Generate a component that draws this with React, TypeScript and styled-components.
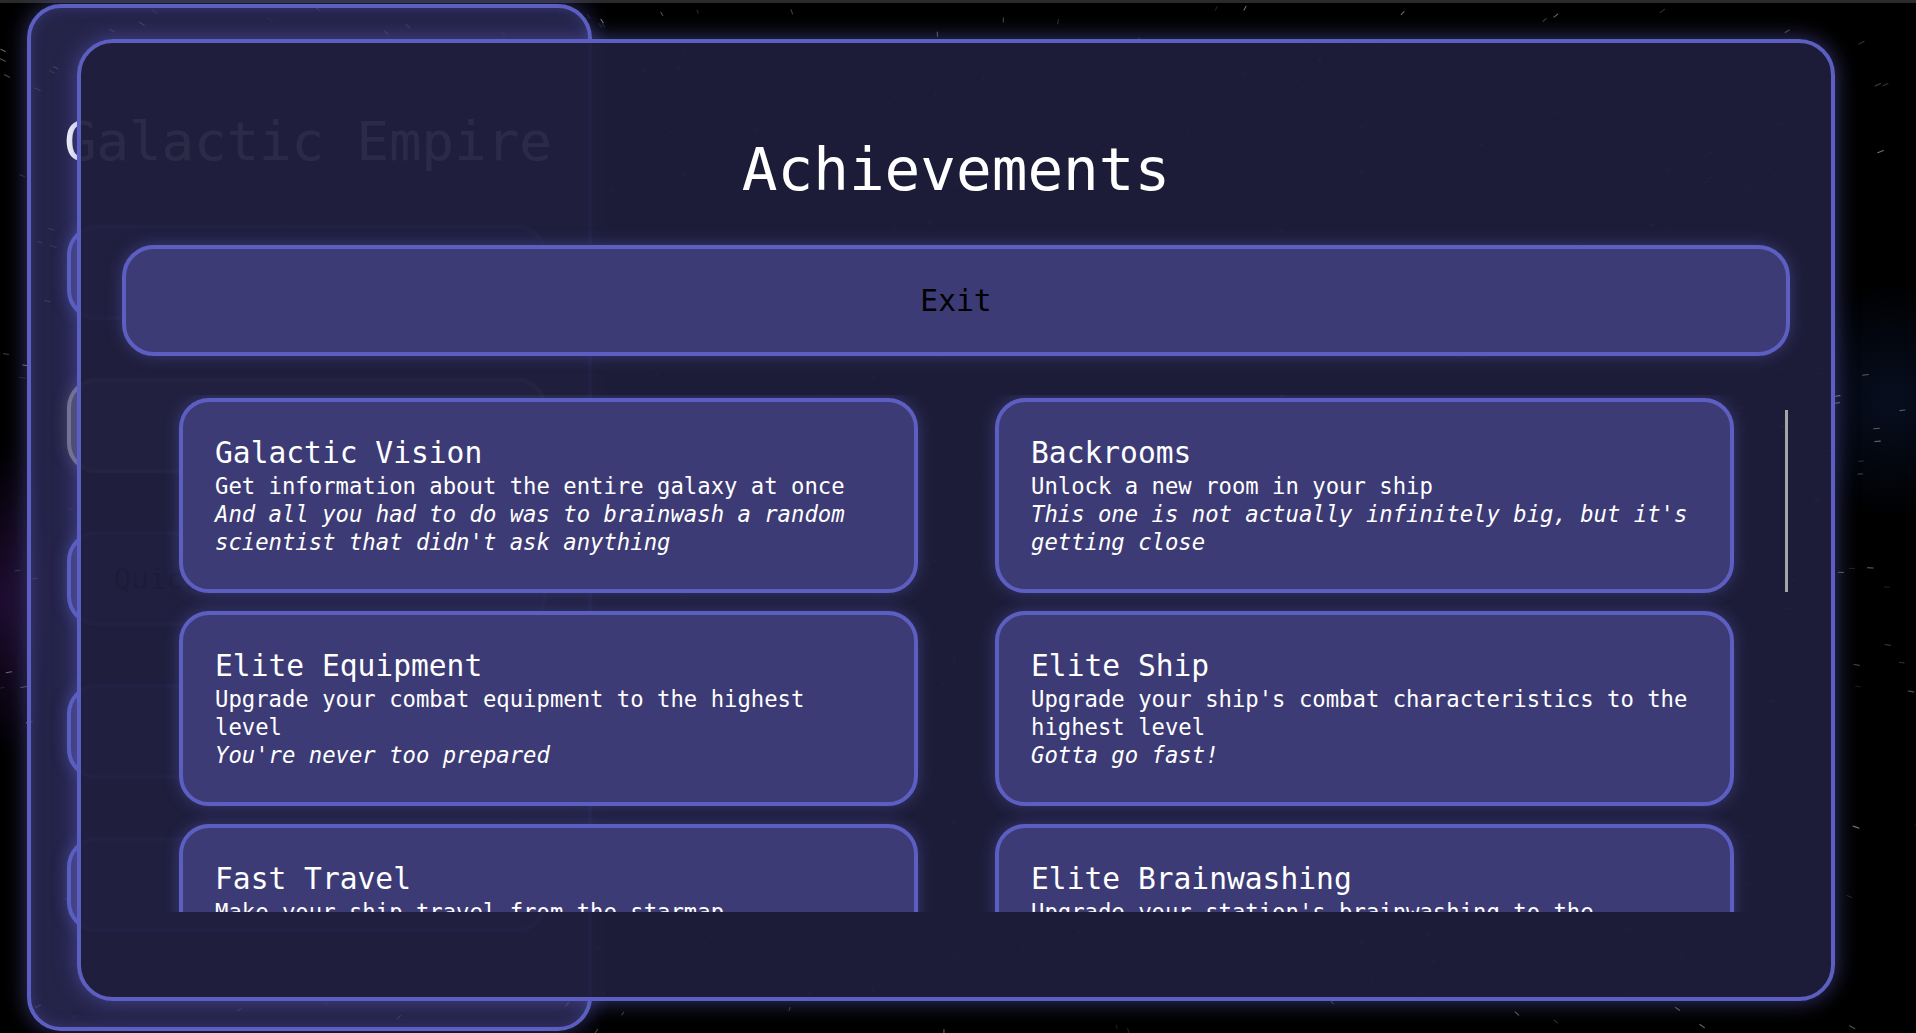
import React, { useMemo } from "react";
import styled, { createGlobalStyle } from "styled-components";

const GlobalStyle = createGlobalStyle`
  html, body {
    margin: 0;
    padding: 0;
    background: #000;
    overflow: hidden;
  }
  * {
    box-sizing: border-box;
  }
`;

const MONO = `"DejaVu Sans Mono", "Liberation Mono", monospace`;
const BORDER = "#5c5fc1";
const PANEL = "#3d3b75";

type Achievement = {
  name: string;
  description: string;
  flavor: string;
};

const achievements: Achievement[] = [
  {
    name: "Galactic Vision",
    description: "Get information about the entire galaxy at once",
    flavor:
      "And all you had to do was to brainwash a random scientist that didn't ask anything",
  },
  {
    name: "Backrooms",
    description: "Unlock a new room in your ship",
    flavor:
      "This one is not actually infinitely big, but it's getting close",
  },
  {
    name: "Elite Equipment",
    description: "Upgrade your combat equipment to the highest level",
    flavor: "You're never too prepared",
  },
  {
    name: "Elite Ship",
    description:
      "Upgrade your ship's combat characteristics to the highest level",
    flavor: "Gotta go fast!",
  },
  {
    name: "Fast Travel",
    description: "Make your ship travel from the starmap",
    flavor: "Who needs a pilot anyway?",
  },
  {
    name: "Elite Brainwashing",
    description: "Upgrade your station's brainwashing to the highest level",
    flavor: "They will never see it coming",
  },
  {
    name: "First Contact",
    description: "Meet another civilization for the first time",
    flavor: "They seem friendly. For now.",
  },
  {
    name: "Conqueror",
    description: "Take control of an entire star system",
    flavor: "One down, a few billion to go",
  },
  {
    name: "Diplomat",
    description: "Sign a peace treaty with a rival empire",
    flavor:
      "Turns out talking is cheaper than building a fleet of warships",
  },
  {
    name: "Hoarder",
    description: "Fill every storage room of your station to the brim",
    flavor: "You might need all of it someday",
  },
  {
    name: "Survivor",
    description: "Win a battle with less than ten percent of your hull left",
    flavor: "That was way too close",
  },
  {
    name: "Galactic Empire",
    description: "Rule over every system of the galaxy",
    flavor:
      "The stars are yours now. Try not to let it go to your head, emperor",
  },
];

const menuItems = [
  { label: "Start New Game", disabled: false },
  { label: "Continue", disabled: true },
  { label: "Quick start (tutorial)", disabled: false },
  { label: "Settings", disabled: false },
  { label: "Quit", disabled: false },
];

// small seeded generator so the star field stays the same on every render
const mulberry32 = (seed: number) => () => {
  seed |= 0;
  seed = (seed + 0x6d2b79f5) | 0;
  let t = Math.imul(seed ^ (seed >>> 15), 1 | seed);
  t = (t + Math.imul(t ^ (t >>> 7), 61 | t)) ^ t;
  return ((t ^ (t >>> 14)) >>> 0) / 4294967296;
};

const StarField = () => {
  const streaks = useMemo(() => {
    const rand = mulberry32(1337);
    const cx = 958;
    const cy = 516;
    const out: { x1: number; y1: number; x2: number; y2: number; o: number }[] =
      [];
    for (let i = 0; i < 640; i++) {
      const x = rand() * 1916;
      const y = rand() * 1033;
      const dx = x - cx;
      const dy = y - cy;
      const d = Math.hypot(dx, dy) || 1;
      const len = 1.2 + (d / 1100) * 4 + rand() * 1.5;
      out.push({
        x1: x,
        y1: y,
        x2: x + (dx / d) * len,
        y2: y + (dy / d) * len,
        o: 0.1 + rand() * 0.35,
      });
    }
    return out;
  }, []);

  return (
    <StarSvg viewBox="0 0 1916 1033" preserveAspectRatio="none">
      {streaks.map((s, i) => (
        <line
          key={i}
          x1={s.x1}
          y1={s.y1}
          x2={s.x2}
          y2={s.y2}
          stroke="#ffffff"
          strokeOpacity={s.o}
          strokeWidth={1.1}
          strokeLinecap="round"
        />
      ))}
    </StarSvg>
  );
};

const App = () => {
  return (
    <>
      <GlobalStyle />
      <Screen>
        <StarField />
        <TopStrip />
        <MenuPanel>
          <MenuTitle>Galactic Empire</MenuTitle>
          <MenuList>
            {menuItems.map((item) => (
              <MenuButton key={item.label} $disabled={item.disabled}>
                {item.label}
              </MenuButton>
            ))}
          </MenuList>
        </MenuPanel>

        <Overlay>
          <Modal>
            <ModalTitle>Achievements</ModalTitle>
            <ExitButton>Exit</ExitButton>
            <ScrollFrame>
              <ScrollArea>
                <CardGrid>
                  {achievements.map((a) => (
                    <Card key={a.name}>
                      <CardTitle>{a.name}</CardTitle>
                      <CardText>{a.description}</CardText>
                      <CardText $italic>{a.flavor}</CardText>
                    </Card>
                  ))}
                </CardGrid>
              </ScrollArea>
              <ScrollTrack>
                <ScrollThumb />
              </ScrollTrack>
            </ScrollFrame>
          </Modal>
        </Overlay>
      </Screen>
    </>
  );
};

const Screen = styled.div`
  position: relative;
  width: 100vw;
  height: 100vh;
  overflow: hidden;
  display: flex;
  flex-direction: column;
  font-family: ${MONO};
  background:
    radial-gradient(ellipse 60px 160px at 4px 600px, rgba(70, 30, 110, 0.45), transparent),
    radial-gradient(ellipse 110px 120px at 1890px 400px, rgba(20, 40, 90, 0.35), transparent),
    #000;
`;

const StarSvg = styled.svg`
  position: absolute;
  inset: 0;
  width: 100%;
  height: 100%;
  pointer-events: none;
`;

const TopStrip = styled.div`
  position: relative;
  height: 3px;
  flex-shrink: 0;
  background: #2b2b2e;
`;

const MenuPanel = styled.div`
  position: relative;
  flex-shrink: 0;
  margin: 1px 0 0 27px;
  width: 565px;
  height: 1027px;
  padding: 102px 41px 0 36px;
  border: 4px solid ${BORDER};
  border-radius: 34px;
  background: rgba(50, 48, 100, 0.72);
  box-shadow:
    0 0 22px rgba(92, 95, 193, 0.55),
    inset 0 0 14px rgba(92, 95, 193, 0.35);
`;

const MenuTitle = styled.h1`
  margin: 0 0 52px -3px;
  font-size: 54px;
  line-height: 63px;
  font-weight: normal;
  color: #fff;
  white-space: nowrap;
`;

const MenuList = styled.div`
  display: flex;
  flex-direction: column;
  gap: 58px;
`;

const MenuButton = styled.button<{ $disabled?: boolean }>`
  height: 95px;
  width: 480px;
  border: 4px solid ${(p) => (p.$disabled ? "#77778a" : BORDER)};
  border-radius: 30px;
  background: ${(p) => (p.$disabled ? "#4a4966" : PANEL)};
  color: #000;
  font-family: ${MONO};
  font-size: 29.2px;
  box-shadow: 0 0 16px
    ${(p) => (p.$disabled ? "rgba(140,140,160,0.3)" : "rgba(92,95,193,0.45)")};
`;

const Overlay = styled.div`
  position: absolute;
  inset: 0;
  padding: 39px 0 0 77px;
`;

const Modal = styled.div`
  width: 1758px;
  height: 962px;
  display: flex;
  flex-direction: column;
  align-items: center;
  padding: 92px 41px 83px;
  border: 4px solid ${BORDER};
  border-radius: 36px;
  background: rgba(31, 30, 59, 0.94);
  box-shadow: 0 0 22px rgba(92, 95, 193, 0.6);
`;

const ModalTitle = styled.h1`
  margin: 0;
  font-size: 59.3px;
  line-height: 69px;
  font-weight: normal;
  color: #fff;
`;

const ExitButton = styled.button`
  flex-shrink: 0;
  margin-top: 41px;
  width: 100%;
  height: 111px;
  border: 4px solid ${BORDER};
  border-radius: 32px;
  background: ${PANEL};
  color: #000;
  font-family: ${MONO};
  font-size: 29.6px;
  box-shadow: 0 0 16px rgba(92, 95, 193, 0.45);
  cursor: pointer;
`;

const ScrollFrame = styled.div`
  flex-shrink: 0;
  display: flex;
  margin-top: 39px;
  width: 100%;
  height: 517px;
`;

const ScrollArea = styled.div`
  flex: 1;
  overflow-y: auto;
  scrollbar-width: none;

  &::-webkit-scrollbar {
    display: none;
  }
`;

const ScrollTrack = styled.div`
  width: 8px;
  flex-shrink: 0;
  padding: 15px 2px 0 3px;
`;

const ScrollThumb = styled.div`
  width: 3px;
  height: 182px;
  background: #a5a5a8;
`;

const CardGrid = styled.div`
  display: grid;
  grid-template-columns: repeat(2, 739px);
  column-gap: 77px;
  row-gap: 18px;
  padding: 3px 0 40px 57px;
`;

const Card = styled.div`
  border: 4px solid ${BORDER};
  border-radius: 30px;
  background: ${PANEL};
  padding: 33px 36px 33px 32px;
  color: #fff;
  box-shadow: 0 0 16px rgba(92, 95, 193, 0.45);
`;

const CardTitle = styled.h2`
  margin: 0;
  font-size: 29.6px;
  line-height: 37px;
  font-weight: normal;
`;

const CardText = styled.p<{ $italic?: boolean }>`
  margin: 0;
  font-size: 22.25px;
  line-height: 28px;
  font-style: ${(p) => (p.$italic ? "italic" : "normal")};
`;

export default App;
